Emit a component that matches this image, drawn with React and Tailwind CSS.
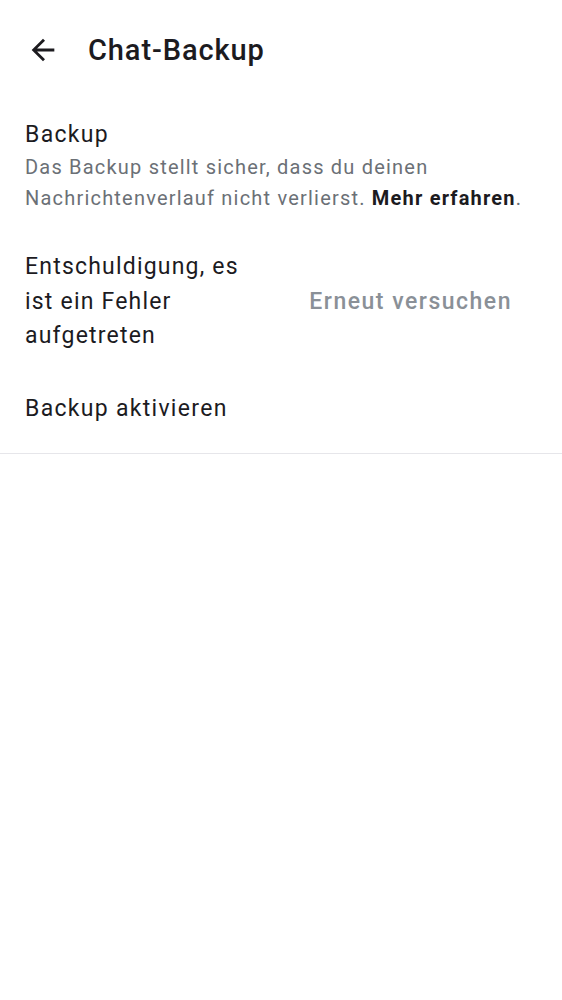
export default function App() {
  return (
    <div className="min-h-screen bg-white text-[#1c1b1f]" style={{ fontFamily: "Roboto, 'Noto Sans', sans-serif" }}>
      {/* header */}
      <div className="flex items-center h-[100px] px-[26px]">
        <svg width="34" height="34" viewBox="0 0 24 24" className="text-[#1c1b1f]">
          <path fill="currentColor" d="M20 11H7.83l5.59-5.59L12 4l-8 8 8 8 1.41-1.41L7.83 13H20v-2z" />
        </svg>
        <h1 className="ml-[28px] text-[29px] leading-none font-medium tracking-[0.9px]">Chat-Backup</h1>
      </div>

      <div className="px-[25px] pt-[20px]">
        <div className="text-[23px] leading-[30px] tracking-[1.3px]">Backup</div>
        <p className="mt-[2px] text-[20px] leading-[31px] text-[#6b7076] tracking-[1.2px]">
          Das Backup stellt sicher, dass du deinen
          <br />
          Nachrichtenverlauf nicht verlierst. <span className="font-bold text-[#1c1b1f]">Mehr erfahren</span>.
        </p>
      </div>

      <div className="flex items-center px-[25px] pt-[36px]">
        <div className="w-[235px] text-[23px] leading-[34.5px] tracking-[1.2px]">
          Entschuldigung, es ist ein Fehler aufgetreten
        </div>
        <div className="flex-1 flex justify-end pr-[25px]">
          <button className="text-[23px] font-medium text-[#8a9097] tracking-[1.5px]">Erneut versuchen</button>
        </div>
      </div>

      <div className="px-[25px] pt-[40px] pb-[29px] border-b border-[#e6e6ea]">
        <div className="text-[23px] leading-[30px] tracking-[1.3px]">Backup aktivieren</div>
      </div>
    </div>
  );
}
